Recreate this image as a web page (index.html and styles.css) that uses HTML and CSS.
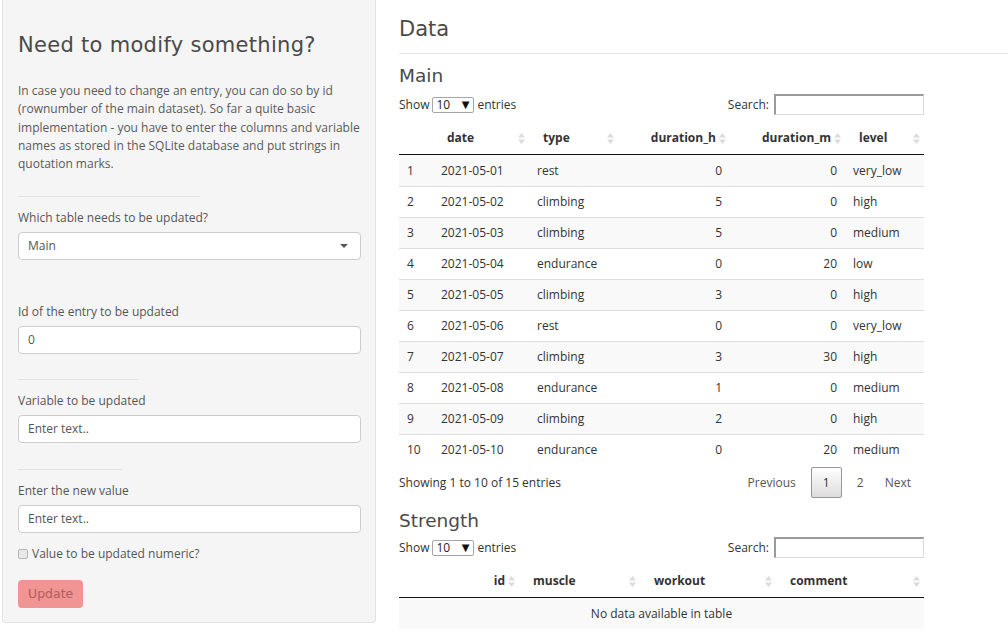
FILE: index.html
```html
<!DOCTYPE html>
<html>
<head>
<meta charset="utf-8">
<link rel="stylesheet" href="styles.css">
</head>
<body>
<div class="page">
  <aside class="sidebar">
    <div class="well">
      <h2 class="title">Need to modify something?</h2>
      <p class="intro">In case you need to change an entry, you can do so by id<br>(rownumber of the main dataset). So far a quite basic<br>implementation - you have to enter the columns and variable<br>names as stored in the SQLite database and put strings in<br>quotation marks.</p>
      <hr class="sep sep-a">
      <div class="label lbl-1">Which table needs to be updated?</div>
      <div class="input select-box">Main<span class="caret"></span></div>
      <div class="label lbl-2">Id of the entry to be updated</div>
      <div class="input">0</div>
      <hr class="sep sep-b">
      <div class="label lbl-3">Variable to be updated</div>
      <div class="input">Enter text..</div>
      <hr class="sep sep-c">
      <div class="label lbl-3">Enter the new value</div>
      <div class="input">Enter text..</div>
      <div class="check-row"><span class="checkbox"></span>Value to be updated numeric?</div>
      <div class="btn">Update</div>
    </div>
  </aside>
  <main class="content">
    <h3 class="data-title">Data</h3>
    <hr class="data-hr">

    <section class="dt">
      <h4 class="dt-title">Main</h4>
      <div class="dt-top">
        <div class="length">Show <span class="len-select">10<span class="len-arrow">▼</span></span> entries</div>
        <div class="search">Search: <span class="search-input"></span></div>
      </div>
      <table class="tbl">
        <colgroup>
          <col class="w-idx"><col class="w-date"><col class="w-type"><col class="w-dh"><col class="w-dm"><col class="w-level">
        </colgroup>
        <thead>
          <tr>
            <th></th>
            <th>date<svg class="sort" viewBox="0 0 7 11"><path d="M0 4.5L3.5 0L7 4.5Z M0 6.5L7 6.5L3.5 11Z"/></svg></th>
            <th>type<svg class="sort" viewBox="0 0 7 11"><path d="M0 4.5L3.5 0L7 4.5Z M0 6.5L7 6.5L3.5 11Z"/></svg></th>
            <th class="num">duration_h<svg class="sort" viewBox="0 0 7 11"><path d="M0 4.5L3.5 0L7 4.5Z M0 6.5L7 6.5L3.5 11Z"/></svg></th>
            <th class="num">duration_m<svg class="sort" viewBox="0 0 7 11"><path d="M0 4.5L3.5 0L7 4.5Z M0 6.5L7 6.5L3.5 11Z"/></svg></th>
            <th>level<svg class="sort" viewBox="0 0 7 11"><path d="M0 4.5L3.5 0L7 4.5Z M0 6.5L7 6.5L3.5 11Z"/></svg></th>
          </tr>
        </thead>
        <tbody>
          <tr><td>1</td><td>2021-05-01</td><td>rest</td><td class="num">0</td><td class="num">0</td><td>very_low</td></tr>
          <tr><td>2</td><td>2021-05-02</td><td>climbing</td><td class="num">5</td><td class="num">0</td><td>high</td></tr>
          <tr><td>3</td><td>2021-05-03</td><td>climbing</td><td class="num">5</td><td class="num">0</td><td>medium</td></tr>
          <tr><td>4</td><td>2021-05-04</td><td>endurance</td><td class="num">0</td><td class="num">20</td><td>low</td></tr>
          <tr><td>5</td><td>2021-05-05</td><td>climbing</td><td class="num">3</td><td class="num">0</td><td>high</td></tr>
          <tr><td>6</td><td>2021-05-06</td><td>rest</td><td class="num">0</td><td class="num">0</td><td>very_low</td></tr>
          <tr><td>7</td><td>2021-05-07</td><td>climbing</td><td class="num">3</td><td class="num">30</td><td>high</td></tr>
          <tr><td>8</td><td>2021-05-08</td><td>endurance</td><td class="num">1</td><td class="num">0</td><td>medium</td></tr>
          <tr><td>9</td><td>2021-05-09</td><td>climbing</td><td class="num">2</td><td class="num">0</td><td>high</td></tr>
          <tr><td>10</td><td>2021-05-10</td><td>endurance</td><td class="num">0</td><td class="num">20</td><td>medium</td></tr>
        </tbody>
      </table>
      <div class="dt-bottom">
        <div class="info">Showing 1 to 10 of 15 entries</div>
        <div class="paging">
          <span class="pg">Previous</span>
          <span class="pg pg-current">1</span>
          <span class="pg">2</span>
          <span class="pg">Next</span>
        </div>
      </div>
    </section>

    <section class="dt dt-2">
      <h4 class="dt-title">Strength</h4>
      <div class="dt-top">
        <div class="length">Show <span class="len-select">10<span class="len-arrow">▼</span></span> entries</div>
        <div class="search">Search: <span class="search-input"></span></div>
      </div>
      <table class="tbl">
        <colgroup>
          <col class="w-idx"><col class="w-id"><col class="w-muscle"><col class="w-workout"><col class="w-comment">
        </colgroup>
        <thead>
          <tr>
            <th></th>
            <th class="num">id<svg class="sort" viewBox="0 0 7 11"><path d="M0 4.5L3.5 0L7 4.5Z M0 6.5L7 6.5L3.5 11Z"/></svg></th>
            <th>muscle<svg class="sort" viewBox="0 0 7 11"><path d="M0 4.5L3.5 0L7 4.5Z M0 6.5L7 6.5L3.5 11Z"/></svg></th>
            <th>workout<svg class="sort" viewBox="0 0 7 11"><path d="M0 4.5L3.5 0L7 4.5Z M0 6.5L7 6.5L3.5 11Z"/></svg></th>
            <th>comment<svg class="sort" viewBox="0 0 7 11"><path d="M0 4.5L3.5 0L7 4.5Z M0 6.5L7 6.5L3.5 11Z"/></svg></th>
          </tr>
        </thead>
        <tbody>
          <tr><td class="empty" colspan="5">No data available in table</td></tr>
        </tbody>
      </table>
    </section>
  </main>
</div>
</body>
</html>
```

FILE: styles.css
```css
html, body {
  margin: 0;
  padding: 0;
  background: #ffffff;
}
body {
  font-family: "Open Sans", "Segoe UI", sans-serif;
  font-size: 12px;
  color: #555555;
  overflow: hidden;
}
.page {
  display: flex;
  align-items: flex-start;
  width: 1008px;
  height: 640px;
}
.sidebar {
  width: 374px;
  padding-left: 2px;
  flex: none;
}
.well {
  background: #f5f5f5;
  border: 1px solid #e3e3e3;
  border-top: none;
  border-radius: 0 0 4px 4px;
  padding: 33px 14px 14px 15px;
}
.title {
  font-family: "DejaVu Sans", sans-serif;
  font-weight: normal;
  font-size: 21px;
  line-height: 24px;
  color: #4a4a4a;
  margin: 0;
  letter-spacing: 0.3px;
}
.intro {
  margin: 25px 0 0;
  line-height: 18.3px;
  color: #5a5a5a;
  white-space: nowrap;
}
.sep {
  border: none;
  border-top: 1px solid #e2e2e2;
  margin: 0;
}
.sep-a { width: 182px; margin-top: 23px; }
.sep-b { width: 120px; margin-top: 25px; }
.sep-c { width: 104px; margin-top: 26px; }
.label {
  line-height: 17px;
  color: #555555;
  margin-top: 12px;
  margin-bottom: 6px;
}
.lbl-2 { margin-top: 43px; }
.input {
  position: relative;
  height: 28px;
  box-sizing: border-box;
  background: #ffffff;
  border: 1px solid #cccccc;
  border-radius: 4px;
  padding: 0 9px;
  line-height: 26px;
  color: #555555;
  width: 343px;
}
.caret {
  position: absolute;
  right: 12px;
  top: 11px;
  width: 0;
  height: 0;
  border-left: 4px solid transparent;
  border-right: 4px solid transparent;
  border-top: 4px solid #555555;
}
.check-row {
  display: flex;
  align-items: center;
  margin-top: 12px;
  line-height: 17px;
  color: #555555;
}
.checkbox {
  width: 8px;
  height: 8px;
  border: 1px solid #b5b5b5;
  background: #e8e8e8;
  border-radius: 2px;
  margin-right: 4px;
}
.btn {
  display: inline-block;
  margin-top: 18px;
  height: 28px;
  line-height: 28px;
  padding: 0 10px;
  background: #f19494;
  color: #b35c5c;
  border-radius: 4px;
  font-family: "DejaVu Sans", sans-serif;
  font-size: 12.5px;
  vertical-align: top;
}

.content {
  flex: 1;
  margin-left: 23px;
  min-width: 0;
}
.data-title {
  font-family: "DejaVu Sans", sans-serif;
  font-weight: normal;
  font-size: 21px;
  line-height: 24px;
  color: #4a4a4a;
  margin: 17px 0 0;
}
.data-hr {
  border: none;
  border-top: 1px solid #e6e6e6;
  margin: 12px 0 0;
}
.dt {
  width: 525px;
  color: #333333;
}
.dt-title {
  font-family: "DejaVu Sans", sans-serif;
  font-weight: normal;
  font-size: 18.5px;
  line-height: 22px;
  color: #4a4a4a;
  margin: 11px 0 0;
}
.dt-2 .dt-title { margin-top: 12px; }
.dt-top {
  display: flex;
  justify-content: space-between;
  align-items: center;
  height: 21px;
  margin-top: 7px;
}
.dt-2 .dt-top { margin-top: 5px; }
.length {
  display: flex;
  align-items: center;
}
.len-select {
  display: inline-flex;
  justify-content: space-between;
  align-items: center;
  width: 42px;
  height: 16px;
  box-sizing: border-box;
  border: 1px solid #a6a6a6;
  border-radius: 2px;
  padding: 0 4px 0 3px;
  margin: 0 3px;
  line-height: 14px;
  color: #222222;
  background: #ffffff;
}
.len-arrow {
  font-size: 10px;
  color: #111111;
  font-family: "DejaVu Sans", sans-serif;
}
.search {
  display: flex;
  align-items: center;
}
.search-input {
  display: inline-block;
  width: 150px;
  height: 21px;
  box-sizing: border-box;
  margin-left: 5px;
  border-top: 2px solid #9a9a9a;
  border-left: 2px solid #9a9a9a;
  border-right: 1px solid #dcdcdc;
  border-bottom: 1px solid #dcdcdc;
  background: #ffffff;
}
.tbl {
  width: 525px;
  table-layout: fixed;
  border-collapse: separate;
  border-spacing: 0;
  margin-top: 8px;
}
.dt-2 .tbl { margin-top: 8px; }
.w-idx { width: 34px; }
.w-date { width: 96px; }
.w-type { width: 89px; }
.w-dh { width: 112px; }
.w-dm { width: 115px; }
.w-level { width: 79px; }
.w-id { width: 86px; }
.w-muscle { width: 121px; }
.w-workout { width: 136px; }
.w-comment { width: 148px; }
.tbl th {
  position: relative;
  text-align: left;
  font-weight: bold;
  color: #333333;
  padding: 7px 18px 8px 14px;
  line-height: 16px;
  border-bottom: 1px solid #111111;
  white-space: nowrap;
}
.tbl th.num {
  text-align: right;
  padding-right: 14px;
}
.sort {
  position: absolute;
  right: 4px;
  top: 10px;
  width: 7px;
  height: 11px;
  fill: #dcdcdc;
}
.tbl td {
  padding: 7px 8px;
  line-height: 16px;
  border-top: 1px solid #dddddd;
  color: #333333;
  white-space: nowrap;
}
.tbl tbody tr:first-child td {
  border-top: none;
  padding-top: 8px;
}
.tbl td.num { text-align: right; }
.tbl tbody tr:nth-child(odd) td { background: #f9f9f9; }
.tbl td.empty {
  text-align: center;
  padding: 7px 8px 7px;
}
.dt-bottom {
  display: flex;
  justify-content: space-between;
  align-items: center;
  margin-top: 2px;
  height: 31px;
}
.info { color: #333333; }
.paging {
  display: flex;
  align-items: center;
}
.pg {
  color: #555555;
  padding: 0 9px;
  line-height: 29px;
}
.pg:first-child { margin-right: 6px; }
.pg:last-child { margin-left: 3px; padding-right: 13px; }
.pg-current {
  width: 31px;
  box-sizing: border-box;
  text-align: center;
  border: 1px solid #979797;
  border-radius: 2px;
  background: linear-gradient(#ffffff, #dcdcdc);
  color: #333333;
  margin-right: 6px;
}
```
